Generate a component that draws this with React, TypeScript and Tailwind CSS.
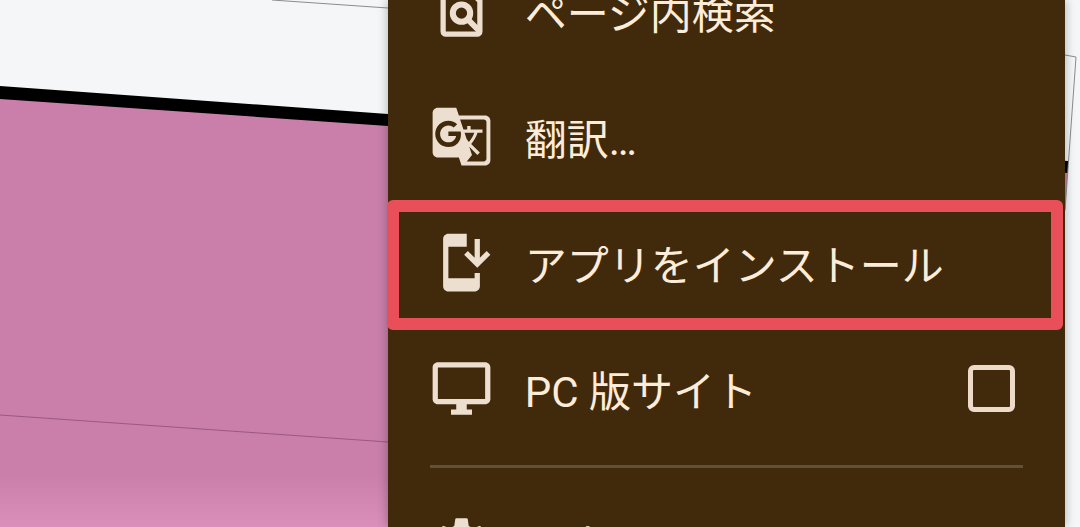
import { ReactNode, useState } from "react";
import { MdGTranslate, MdInstallMobile, MdSettings } from "react-icons/md";

interface MenuItemProps {
  icon: ReactNode;
  label: string;
  highlighted?: boolean;
}

const FindInPageIcon = () => {
  return (
    <svg
      viewBox="0 0 24 24"
      width="1em"
      height="1em"
      fill="none"
      stroke="currentColor"
    >
      <path
        d="M6 3h7.6L19 8.4V20a1 1 0 0 1-1 1H6a1 1 0 0 1-1-1V4a1 1 0 0 1 1-1z"
        strokeWidth="2"
      />
      <circle cx="12" cy="13" r="3.3" strokeWidth="2.3" />
      <path d="M14.2 15.2L18.8 19.8" strokeWidth="2.2" />
    </svg>
  );
};

const DesktopIcon = () => {
  return (
    <svg viewBox="0 0 24 24" width="1em" height="1em" fill="currentColor">
      <path d="M21 2H3c-1.1 0-2 .9-2 2v12c0 1.1.9 2 2 2h7v2H8v2h8v-2h-2v-2h7c1.1 0 2-.9 2-2V4c0-1.1-.9-2-2-2zm0 14H3V4h18v12z" />
    </svg>
  );
};

const MenuItem = ({ icon, label, highlighted }: MenuItemProps) => {
  return (
    <li className="relative">
      <button
        type="button"
        className="flex h-[126px] w-full items-center gap-8 pl-[42px] pr-[50px] text-left"
      >
        <span className="shrink-0 text-[63px] text-[#eddfcf]">{icon}</span>
        <span className="whitespace-nowrap pt-2.5">{label}</span>
      </button>
      {highlighted && (
        <div className="pointer-events-none absolute -left-px right-0.5 top-px -bottom-[5px] rounded-md border-12 border-[#e94f58]" />
      )}
    </li>
  );
};

// Tilted page behind the menu
const Backdrop = () => {
  return (
    <svg
      className="absolute inset-0 h-full w-full"
      viewBox="0 0 1080 527"
      preserveAspectRatio="xMidYMin slice"
      aria-hidden="true"
    >
      <defs>
        <linearGradient id="pink" x1="0" y1="0" x2="0" y2="1">
          <stop offset="0" stopColor="#c97faa" />
          <stop offset="0.88" stopColor="#c97faa" />
          <stop offset="1" stopColor="#d98fba" />
        </linearGradient>
      </defs>
      <path d="M0 92L1068 167L1065 212L1040 527H0Z" fill="url(#pink)" />
      <path d="M0 86L388 114L1068 161V173L388 126L0 99Z" fill="#000" />
      <path
        d="M272 0L388 8M1065 55L1076 57L1065 210"
        fill="none"
        stroke="#8c8c8e"
        strokeWidth="1"
      />
      <path d="M0 415L388 442" fill="none" stroke="#9c5784" strokeWidth="1" />
    </svg>
  );
};

export default function App() {
  const [desktopSite, setDesktopSite] = useState(false);

  return (
    <main className="relative flex h-screen justify-end overflow-hidden bg-[#f4f6f8] pr-[15px]">
      <Backdrop />
      <nav className="relative h-full w-[63.6%] bg-[#402a0b] font-[Roboto,'Noto_Sans_CJK_JP',sans-serif] text-[42px] leading-[60px] text-[#feecda] shadow-[0_0_10px_rgba(0,0,0,0.3)]">
        {/* the list is scrolled, its first row is partly out of view */}
        <ul className="-mt-[53px]">
          <MenuItem icon={<FindInPageIcon />} label="ページ内検索" />
          <MenuItem icon={<MdGTranslate />} label="翻訳…" />
          <MenuItem
            icon={<MdInstallMobile />}
            label="アプリをインストール"
            highlighted
          />
          <li>
            <label className="flex h-[126px] items-center gap-8 pl-[42px] pr-[50px]">
              <span className="shrink-0 text-[63px] text-[#eddfcf]">
                <DesktopIcon />
              </span>
              <span className="flex-1 whitespace-nowrap pt-2.5">
                PC 版サイト
              </span>
              <input
                type="checkbox"
                checked={desktopSite}
                onChange={(e) => setDesktopSite(e.target.checked)}
                className="size-[47px] shrink-0 appearance-none rounded-md border-5 border-[#eddac8] checked:bg-[#eddac8]"
              />
            </label>
          </li>
          <li className="px-[42px] pb-3 pt-3.5">
            <hr className="border-t-3 border-[#635039]" />
          </li>
          <MenuItem icon={<MdSettings />} label="設定" />
        </ul>
      </nav>
    </main>
  );
}
